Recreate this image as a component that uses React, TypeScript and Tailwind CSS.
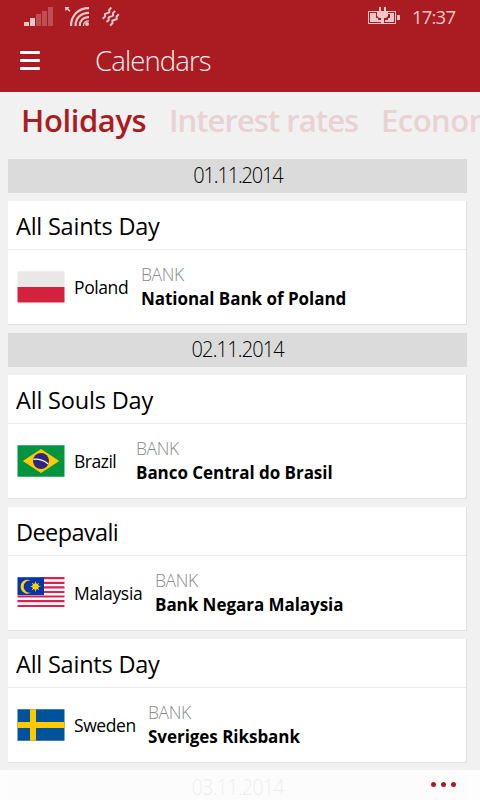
import type { ReactNode } from "react"

function IconSignal() {
  return (
    <svg width="30" height="20" viewBox="0 0 30 20" fill="#ebc6c8">
      <path d="M0 15h5v4H0zM6 11h5v8H6z" />
      <path d="M12 7h5v12h-5zM18 4h5v15h-5zM24 0h5v19h-5z" opacity=".3" />
    </svg>
  )
}

function IconWifi() {
  return (
    <svg width="25" height="20" viewBox="0 0 25 20" fill="none">
      <path d="M0 0h4.5L3.2 1.3 5.5 3.8l-1 1L2 2.4.5 4.2z" fill="#ebc6c8" />
      <g stroke="#ebc6c8" strokeWidth="2.2">
        <path d="M6 19C6 8.8 13 1.2 24 1.2" />
        <path d="M10.5 19C10.5 11.5 15.5 5.8 24 5.8" />
        <path d="M14.8 19C14.8 13.8 18 10.2 24 10.2" />
        <path d="M18.4 19C18.4 16 20 13.8 24 13.8" strokeWidth="1.2" />
      </g>
      <circle cx="22" cy="17" r="2" fill="#ebc6c8" />
    </svg>
  )
}

function IconVibrate() {
  return (
    <svg
      width="18"
      height="20"
      viewBox="0 0 18 20"
      fill="none"
      stroke="#ebc6c8"
      strokeWidth="2"
      strokeLinejoin="round"
    >
      <path d="M9.4.6 7.200 2.800 7.400 5.300 2.900 7.100 3.100 9.600.7 11.800" />
      <path d="M13.100 3.900 10.900 6.100 11.100 8.600 6.600 10.400 6.800 12.900 4.400 15.100" />
      <path d="M16.800 7.300 14.600 9.500 14.800 12 10.300 13.800 10.500 16.300 8.100 18.500" />
    </svg>
  )
}

function IconBattery() {
  return (
    <svg width="32" height="18" viewBox="0 0 32 18" fill="#ebc6c8">
      <path d="M0 4h9v1H1v11h12v1H0zM19 4h9v13H16v-1h11V5h-8z" />
      <path d="M2 6h6v5h2v2h3v2H2zM20 6h6v9h-9v-2h3v-2h2V7h-2z" />
      <path d="M11 0h2v4h3V0h2v4h2v5l-2 2h-2v6h-3v-6h-2l-2-2V4h2z" />
      <path d="M29 8h3v5h-3z" />
    </svg>
  )
}

function FlagPoland() {
  return (
    <svg width="48" height="32" viewBox="0 0 48 32">
      <path d="M.5.2h47V16H.5z" fill="#e9e8e7" />
      <path d="M.5 16h47v15.6H.5z" fill="#d4213d" />
    </svg>
  )
}

function FlagBrazil() {
  return (
    <svg width="48" height="32" viewBox="0 0 48 32">
      <path d="M.5.3h47v31.4H.5z" fill="#009440" />
      <path d="M5.8 16 24 4l18.3 12L24 28z" fill="#ffcb00" />
      <circle cx="24" cy="16" r="8" fill="#302681" />
      <path
        d="M16.4 14.3c5.5-.5 10.8 1.3 14.8 4.7"
        stroke="#fff"
        strokeWidth="1.2"
        fill="none"
      />
    </svg>
  )
}

function FlagMalaysia() {
  return (
    <svg width="48" height="32" viewBox="0 0 48 32">
      <path d="M.5.2h47v30H.5z" fill="#fff" />
      <path
        d="M24 1.2h23.5M24 5.8h23.5M24 10.4h23.5M24 15h23.5M.5 19.5h47M.5 24.2h47M.5 29h47"
        stroke="#dc2150"
        strokeWidth="2.2"
      />
      <path d="M.5.2h26.5v17.9H.5z" fill="#0035ad" />
      <path d="M14.3 3.8a7 7 0 1 0 0 11.8 6.1 6.1 0 1 1 0-11.8z" fill="#ffd100" />
      <circle cx="18.5" cy="9.5" r="3.3" fill="#ffd100" />
      <path
        d="M18.5 4.5v10M13.5 9.5h10M15 6l7 7M22 6l-7 7"
        stroke="#ffd100"
        strokeWidth=".8"
      />
    </svg>
  )
}

function FlagSweden() {
  return (
    <svg width="48" height="32" viewBox="0 0 48 32">
      <path d="M.5.3h47v31.4H.5z" fill="#00539a" />
      <path d="M13 .3h6v31.4h-6zM.5 13h47v6H.5z" fill="#ffcb00" />
    </svg>
  )
}

function DateBar({
  children,
  textClass,
}: {
  children: ReactNode
  textClass: string
}) {
  return (
    <div className="flex h-[34px] shrink-0 items-start justify-center bg-[#dbdbdb] pt-1 text-black">
      <span
        className={`scale-x-[0.93] text-[21.5px] font-light leading-6 ${textClass}`}
      >
        {children}
      </span>
    </div>
  )
}

type HolidayProps = {
  title: string
  titleClass: string
  flag: ReactNode
  country: string
  countryClass: string
  bank: string
}

function HolidayCard({
  title,
  titleClass,
  flag,
  country,
  countryClass,
  bank,
}: HolidayProps) {
  return (
    <article className="h-[124px] shrink-0 border-r border-b border-[#e0e0e0] bg-white text-black">
      <h2
        className={`h-[49px] border-b border-[#ebebeb] pl-2 text-[23.5px] font-normal leading-[51px] whitespace-nowrap ${titleClass}`}
      >
        {title}
      </h2>
      <div className="flex h-[74px] items-center pl-[9px]">
        {flag}
        <span
          className={`ml-[9px] shrink-0 text-[17.5px] leading-6 whitespace-nowrap ${countryClass}`}
        >
          {country}
        </span>
        <div className="whitespace-nowrap leading-6">
          <div className="-mt-px mb-px text-[17.5px] font-light tracking-[-0.4px] text-[#8a8a8a]">
            BANK
          </div>
          <div className="text-[17px] font-bold tracking-[-0.04px]">{bank}</div>
        </div>
      </div>
    </article>
  )
}

export default function App() {
  return (
    <main className="relative flex h-[800px] w-[480px] flex-col overflow-hidden bg-[#f1f1f1] font-['Open_Sans','Noto_Sans',sans-serif]">
      <header className="h-[92px] shrink-0 bg-[#aa1c22]">
        {/* Status bar */}
        <div className="flex h-8 items-start pt-[7px] pr-6 pl-6">
          <IconSignal />
          <div className="ml-[11px]">
            <IconWifi />
          </div>
          <div className="ml-3">
            <IconVibrate />
          </div>
          <div className="ml-auto">
            <IconBattery />
          </div>
          <span className="ml-3 w-11 text-[18.5px] leading-[20px] tracking-[-0.8px] whitespace-nowrap text-[#ebc6c8]">
            17:37
          </span>
        </div>

        {/* Title bar */}
        <div className="flex h-[57px] items-center pl-5">
          <button className="flex w-5 flex-col gap-[5px]" aria-label="Menu">
            <span className="h-[3px] rounded-[1px] bg-white" />
            <span className="h-[3px] rounded-[1px] bg-white" />
            <span className="h-[3px] rounded-[1px] bg-white" />
          </button>
          <h1 className="ml-[55px] text-[27.5px] font-light leading-[58px] tracking-[-0.87px] text-[#fbeeee]">
            Calendars
          </h1>
        </div>
      </header>

      <nav className="flex h-[67px] shrink-0 pl-[21px] text-[31px] font-semibold leading-[57px] whitespace-nowrap text-[#e8d2d3]">
        <span className="w-[148px] shrink-0 tracking-[-0.4px] text-[#aa1c22]">
          Holidays
        </span>
        <span className="w-[212px] shrink-0 tracking-[-0.95px]">
          Interest rates
        </span>
        <span className="shrink-0 tracking-[-0.5px]">Economic</span>
      </nav>

      <section className="flex w-[467px] flex-col gap-2 pl-2">
        <DateBar textClass="tracking-[-1.25px]">01.11.2014</DateBar>
        <HolidayCard
          title="All Saints Day"
          titleClass="tracking-[-0.22px]"
          flag={<FlagPoland />}
          country="Poland"
          countryClass="w-[67px] tracking-[-0.4px]"
          bank="National Bank of Poland"
        />
        <DateBar textClass="tracking-[-0.9px]">02.11.2014</DateBar>
        <HolidayCard
          title="All Souls Day"
          titleClass="tracking-[-0.18px]"
          flag={<FlagBrazil />}
          country="Brazil"
          countryClass="w-[62px] tracking-[-0.5px]"
          bank="Banco Central do Brasil"
        />
        <HolidayCard
          title="Deepavali"
          titleClass="tracking-[-0.6px]"
          flag={<FlagMalaysia />}
          country="Malaysia"
          countryClass="w-[81px] tracking-[-0.3px]"
          bank="Bank Negara Malaysia"
        />
        <HolidayCard
          title="All Saints Day"
          titleClass="tracking-[-0.22px]"
          flag={<FlagSweden />}
          country="Sweden"
          countryClass="w-[74px] tracking-[-0.4px]"
          bank="Sveriges Riksbank"
        />
        <DateBar textClass="tracking-[-0.9px]">03.11.2014</DateBar>
      </section>

      {/* App bar, slides over the list */}
      <footer className="absolute inset-x-0 bottom-0 flex h-[30px] items-start justify-end gap-[5px] bg-[#fefefe]/93 pt-3 pr-6">
        <span className="size-[5px] rounded-full bg-[#aa1c22]" />
        <span className="size-[5px] rounded-full bg-[#aa1c22]" />
        <span className="size-[5px] rounded-full bg-[#aa1c22]" />
      </footer>
    </main>
  )
}
